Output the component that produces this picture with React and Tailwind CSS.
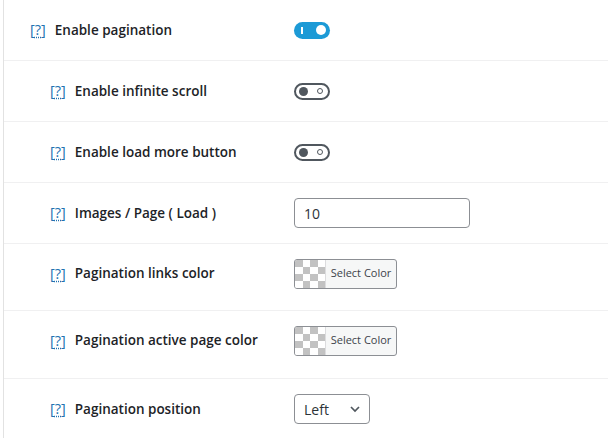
import React from "react";

function Help() {
  return (
    <span className="text-[#2271b1] font-normal text-[14.5px] mr-[9px]">
      [<span className="underline decoration-dotted underline-offset-2">?</span>]
    </span>
  );
}

function Label({ text, indent }) {
  return (
    <div className={`w-[290px] shrink-0 flex items-center ${indent ? "pl-[46px]" : "pl-[26px]"}`}>
      <Help />
      <span className="font-semibold text-[#1d2327]">{text}</span>
    </div>
  );
}

function ToggleOn() {
  return (
    <div className="w-[36px] h-[17px] rounded-full bg-[#1c9ad6] flex items-center justify-between px-[4px]">
      <div className="w-[2px] h-[7px] bg-white ml-[3px]" />
      <div className="w-[10px] h-[10px] rounded-full bg-white" />
    </div>
  );
}

function ToggleOff() {
  return (
    <div className="w-[36px] h-[17px] rounded-full border-2 border-[#50575e] flex items-center justify-between px-[3px]">
      <div className="w-[9px] h-[9px] rounded-full bg-[#50575e]" />
      <div className="w-[6px] h-[6px] rounded-full border-[1.5px] border-[#50575e] mr-[2px]" />
    </div>
  );
}

function Checker() {
  const cells = [];
  for (let r = 0; r < 4; r++) {
    for (let c = 0; c < 4; c++) {
      const gray = (r + c) % 2 === 0;
      cells.push(<div key={`${r}-${c}`} className={gray ? "bg-[#c2c2c2]" : "bg-white"} />);
    }
  }
  return <div className="w-[30px] h-full grid grid-cols-4 grid-rows-4">{cells}</div>;
}

function ColorButton() {
  return (
    <div className="w-[103px] h-[30px] rounded-[3px] border border-[#8c8f94] overflow-hidden flex bg-[#f6f7f7]">
      <Checker />
      <div className="flex-1 flex items-center justify-center text-[11px] text-[#3c434a] border-l border-[#dcdcde]">
        Select Color
      </div>
    </div>
  );
}

function Row({ children, h, last }) {
  return (
    <div className={`flex items-center ${h} ${last ? "" : "border-b border-[#f0f0f1]"}`}>{children}</div>
  );
}

export default function App() {
  return (
    <div
      className="w-[608px] h-[438px] bg-white overflow-hidden text-[13.5px]"
      style={{ fontFamily: '"Open Sans", "Noto Sans", sans-serif' }}
    >
      <div className="ml-[3px] h-full border-l border-[#e2e2e2]">
        <Row h="h-[61px]">
          <Label text="Enable pagination" />
          <ToggleOn />
        </Row>
        <Row h="h-[61px]">
          <Label text="Enable infinite scroll" indent />
          <ToggleOff />
        </Row>
        <Row h="h-[61px]">
          <Label text="Enable load more button" indent />
          <ToggleOff />
        </Row>
        <Row h="h-[61px]">
          <Label text="Images / Page ( Load )" indent />
          <div className="w-[176px] h-[30px] rounded-[4px] border border-[#8c8f94] flex items-center px-[9px] text-[14px] text-[#2c3338]">
            10
          </div>
        </Row>
        <Row h="h-[67px] pb-[7px]">
          <Label text="Pagination links color" indent />
          <ColorButton />
        </Row>
        <Row h="h-[68px] pb-[8px]">
          <Label text="Pagination active page color" indent />
          <ColorButton />
        </Row>
        <Row h="h-[60px]" last>
          <Label text="Pagination position" indent />
          <div className="w-[76px] h-[30px] rounded-[4px] border border-[#8c8f94] flex items-center justify-between pl-[9px] pr-[8px] text-[14px] text-[#2c3338]">
            <span>Left</span>
            <svg width="12" height="12" viewBox="0 0 12 12" fill="none">
              <path d="M2 4l4 4 4-4" stroke="#50575e" strokeWidth="1.7" />
            </svg>
          </div>
        </Row>
      </div>
    </div>
  );
}
